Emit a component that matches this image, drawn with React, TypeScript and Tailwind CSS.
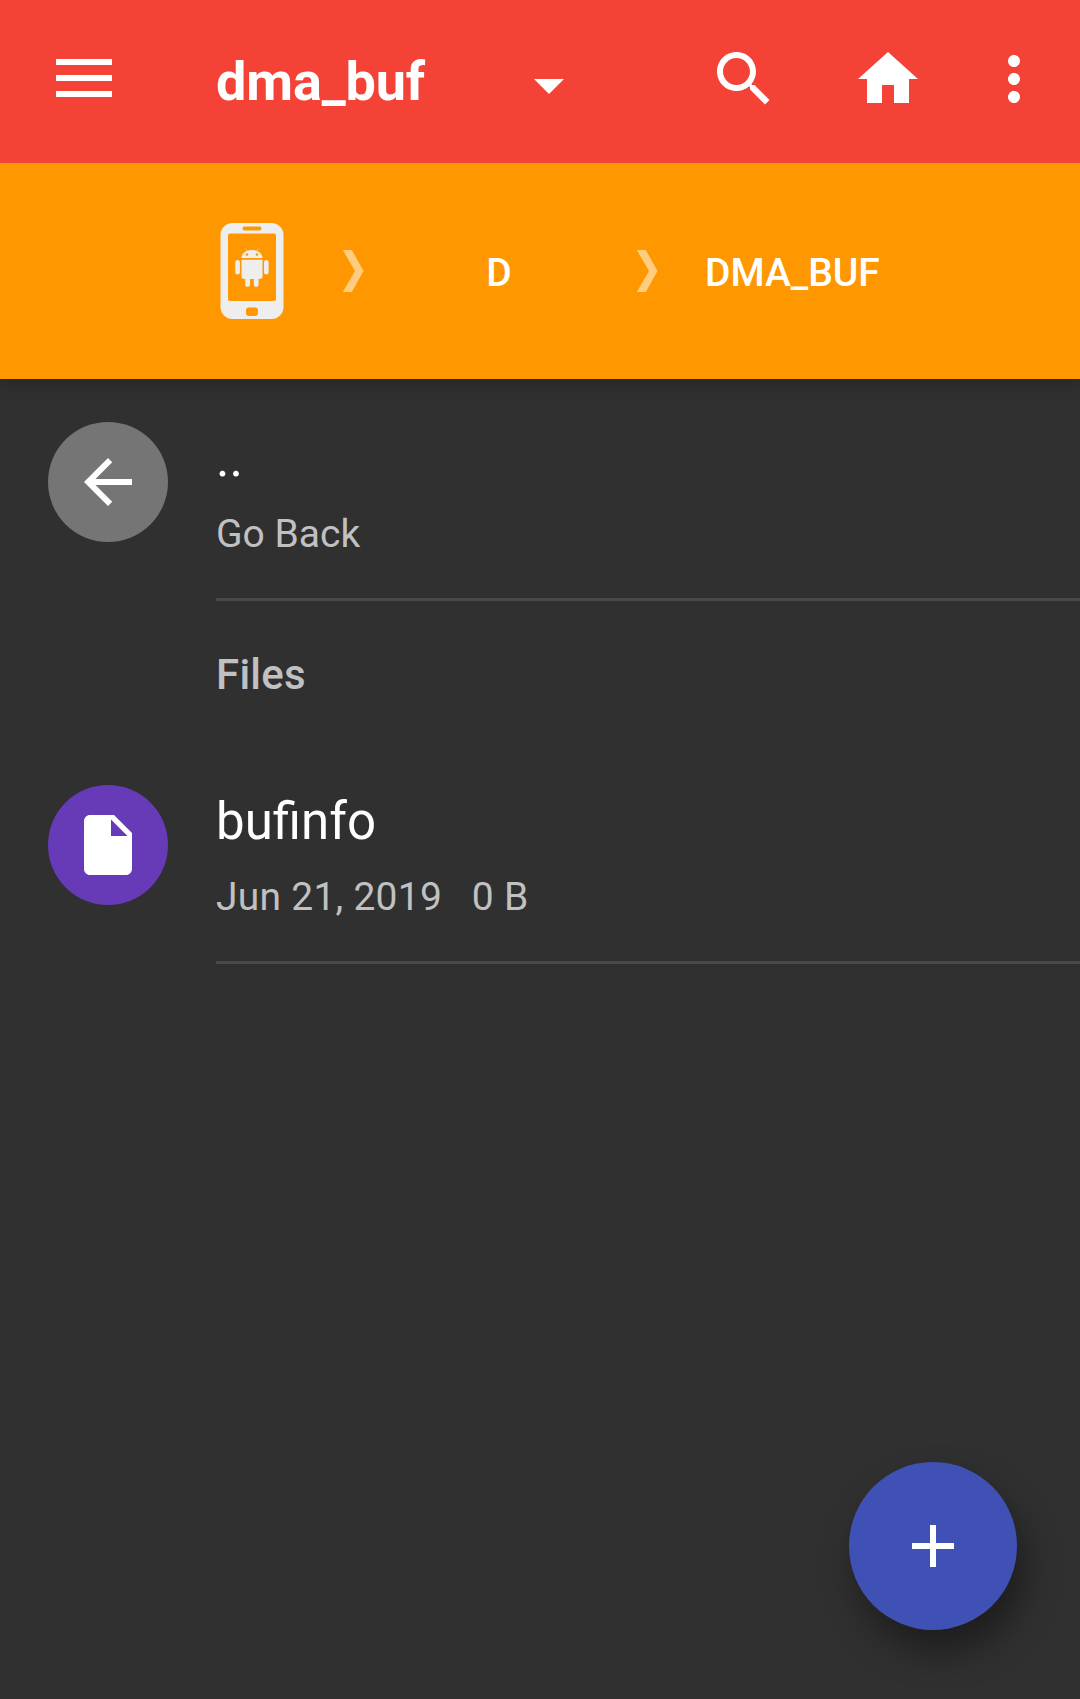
import type { ReactNode } from "react";

function Icon({ d, className = "" }: { d: string; className?: string }) {
  return (
    <svg viewBox="0 0 24 24" fill="currentColor" className={`size-[72px] shrink-0 ${className}`}>
      <path d={d} />
    </svg>
  );
}

function Chevron() {
  return (
    <svg viewBox="0 0 22 42" className="h-[42px] w-[22px] shrink-0" fill="#ffcc80">
      <path d="M0.800 0H9.800L21.500 21L9.800 42H0.800L13 21Z" />
    </svg>
  );
}

/* Handset with the Android robot on its screen */
function PhoneIcon() {
  return (
    <svg viewBox="0 0 64 96" className="h-24 w-16 shrink-0">
      <path
        fill="#eeeeee"
        fillRule="evenodd"
        d="M12 0H51.500A12 12 0 0 1 63.500 12V84A12 12 0 0 1 51.500 96H12.500A12 12 0 0 1 0.500 84V12A12 12 0 0 1 12.500 0ZM10 10.500A2 2 0 0 0 8 12.500V76A2 2 0 0 0 10 78H54A2 2 0 0 0 56 76V12.500A2 2 0 0 0 54 10.500ZM24.500 3.500A2 2 0 0 0 24.500 7.500H39.500A2 2 0 0 0 39.500 3.500ZM29 84.500A3 3 0 0 0 26 87.500V90A3 3 0 0 0 29 93H35A3 3 0 0 0 38 90V87.500A3 3 0 0 0 35 84.500Z"
      />
      <g fill="#eeeeee">
        <path
          fillRule="evenodd"
          d="M21.500 35C21.500 30.500 26 27 32 27S42.500 30.500 42.500 35ZM27 30.200A1.300 1.300 0 1 0 27 32.800A1.300 1.300 0 1 0 27 30.200ZM37 30.200A1.300 1.300 0 1 0 37 32.800A1.300 1.300 0 1 0 37 30.200Z"
        />
        <path d="M21.500 36.800H42.500V53A3 3 0 0 1 39.500 56H24.500A3 3 0 0 1 21.500 53Z" />
        <rect x="15.300" y="37" width="4.600" height="14.500" rx="2.300" />
        <rect x="44" y="37" width="4.600" height="14.500" rx="2.300" />
        <rect x="25.200" y="50" width="4.800" height="14" rx="2.400" />
        <rect x="33.800" y="50" width="4.800" height="14" rx="2.400" />
      </g>
      <path d="M25.200 25.500L27.500 28.500M38.800 25.500L36.500 28.500" stroke="#eeeeee" strokeWidth="0.800" opacity="0.700" />
    </svg>
  );
}

function Row({ icon, circle, title, detail }: { icon: ReactNode; circle: string; title: string; detail: ReactNode }) {
  return (
    <div className="flex h-[222px] pl-12">
      <div className={`mt-[43px] flex size-[120px] shrink-0 items-center justify-center rounded-full ${circle}`}>
        {icon}
      </div>
      <div className="ml-12 flex-1 border-b-[3px] border-[#494949] pt-[50px]">
        <div className="text-[51px] leading-[60px] text-white">{title}</div>
        <div className="mt-[21px] text-[39px] leading-[48px] whitespace-pre text-[#c1c1c1]">{detail}</div>
      </div>
    </div>
  );
}

export default function App() {
  return (
    <div className="relative flex h-[1699px] w-[1080px] flex-col overflow-hidden bg-[#303030] font-['Roboto',sans-serif] text-white">
      <header className="shadow-[0_3px_18px_rgba(0,0,0,0.25)]">
        <div className="flex h-[163px] items-center bg-[#f44336]">
          <svg viewBox="0 0 56 38" className="-mt-[7px] ml-14 h-[38px] w-14 shrink-0" fill="#fff">
            <path d="M0 0H56V6H0ZM0 16H56V22H0ZM0 32H56V38H0Z" />
          </svg>
          <h1 className="ml-[104px] w-[297px] text-[54px] leading-[64px] font-bold tracking-[-0.15px]">dma_buf</h1>
          <Icon d="M7 10l5 5 5-5z" className="mt-[6px]" />
          <Icon
            d="M15.500 14h-.79l-.28-.27C15.410 12.590 16 11.110 16 9.500 16 5.910 13.090 3 9.500 3S3 5.910 3 9.500 5.910 16 9.500 16c1.610 0 3.090-.59 4.230-1.570l.27.28v.79l5 4.990L20.490 19l-4.990-5zm-6 0C7.010 14 5 11.990 5 9.500S7.010 5 9.500 5 14 7.010 14 9.500 11.990 14 9.500 14z"
            className="-mt-[5px] ml-[123px]"
          />
          <Icon d="M10 20v-6h4v6h5v-8h3L12 3 2 12h3v8z" className="-mt-[5px] ml-[72px]" />
          <Icon
            d="M12 8c1.100 0 2-.9 2-2s-.9-2-2-2-2 .9-2 2 .9 2 2 2zm0 2c-1.100 0-2 .9-2 2s.9 2 2 2 2-.9 2-2-.9-2-2-2zm0 6c-1.100 0-2 .9-2 2s.9 2 2 2 2-.9 2-2-.9-2-2-2z"
            className="-mt-[5px] ml-[54px]"
          />
        </div>
        <nav className="flex h-[216px] items-center bg-[#ff9800] pl-[220px] text-[39px] leading-[48px] font-medium">
          <PhoneIcon />
          <div className="ml-[58px] flex">
            <Chevron />
          </div>
          <span className="w-[272px] pt-[3px] pr-[2px] text-center">D</span>
          <Chevron />
          <span className="ml-[47px] pt-[3px]">DMA_BUF</span>
        </nav>
      </header>

      <main>
        <Row
          circle="bg-[#757575]"
          title=".."
          detail="Go Back"
          icon={<Icon d="M20 11H7.830l5.590-5.590L12 4l-8 8 8 8 1.410-1.410L7.830 13H20v-2z" />}
        />
        <h2 className="flex h-[141px] items-center pt-[6px] pl-[216px] text-[42px] leading-[48px] font-medium tracking-[0.25px] text-[#c1c1c1]">
          Files
        </h2>
        <Row
          circle="bg-[#673ab7]"
          title="bufinfo"
          detail={<span className="tracking-[0.25px]">{"Jun 21, 2019   0 B"}</span>}
          icon={
            <Icon d="M6 2c-1.100 0-1.990.9-1.990 2L4 20c0 1.100.89 2 1.990 2H18c1.100 0 2-.9 2-2V8l-6-6H6zm7 7V3.500L18.500 9H13z" />
          }
        />
      </main>

      <button className="absolute right-[63px] bottom-[69px] flex size-[168px] items-center justify-center rounded-full bg-[#3f51b5] shadow-[8px_21px_36px_rgba(0,0,0,0.4)]">
        <Icon d="M19 13h-6v6h-2v-6H5v-2h6V5h2v6h6v2z" />
      </button>
    </div>
  );
}
